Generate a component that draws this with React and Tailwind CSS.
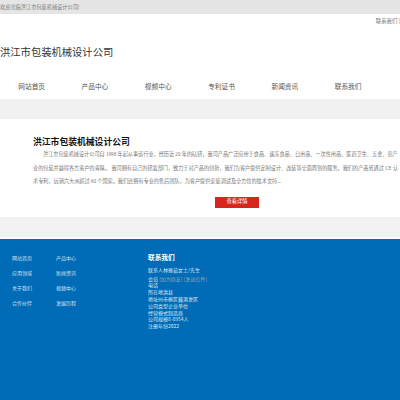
export default function App() {
  const nav = ["网站首页", "产品中心", "视频中心", "专利证书", "新闻资讯", "联系我们"];
  const col1 = ["网站首页", "应用领域", "关于我们", "合作伙伴"];
  const col2 = ["产品中心", "新闻资讯", "视频中心", "发展历程"];
  const font = { fontFamily: '"Liberation Serif", "Noto Sans CJK SC", serif' };
  return (
    <div className="w-full h-[400px] overflow-hidden bg-white" style={{ fontFamily: '"Noto Sans CJK SC", sans-serif' }}>
      <div className="h-[14px] bg-[#e5e5e5] flex items-center text-[5.2px] text-[#777] leading-none whitespace-nowrap">
        欢迎光临洪江市包装机械设计公司!
      </div>
      <div className="h-[16px] flex justify-end items-center text-[5.4px] text-[#777] leading-none whitespace-nowrap">
        <span>联系我们 |</span>
      </div>
      <div className="h-[44px] flex items-center text-[10.3px] text-[#333] leading-none whitespace-nowrap">
        洪江市包装机械设计公司
      </div>
      <div className="h-[25px] flex items-center text-[6.7px] text-[#555] leading-none">
        {nav.map((n) => (
          <div key={n} className="w-[63.3px] text-center whitespace-nowrap">{n}</div>
        ))}
      </div>
      <div className="h-[20px] bg-[#f1f1f1]" />
      <div className="h-[98px] pl-[33px] pt-[17px] overflow-hidden">
        <div className="text-[8.8px] font-bold text-[#111] leading-[12px] whitespace-nowrap">洪江市包装机械设计公司</div>
        <div className="text-[5.15px] text-[#777] leading-[13.5px] whitespace-nowrap" style={font}>
          <div className="pl-[10px]">洪江市包装机械设计公司自 1998 年起从事该行业，经历近 20 年的砧研，我司产品广泛应用于食品、速冻食品、日用品、一次性用品、医药卫生、五金、农产</div>
          <div>业的包装并赢得各方客户的青睐。 我司拥有自己的研发部门，致力于对产品的创新，我们为客户提供定制设计、改装等全面周到的服务。我们的产品皆通过 CE 认</div>
          <div>术专利，远销六大洲超过 60 个国家。我们还拥有专业的售后团队，为客户提供安装调试及全方位的技术支持...</div>
        </div>
        <div className="ml-[182px] mt-[8px] w-[44px] h-[11px] bg-[#d7261e] flex items-center justify-center text-[5.3px] text-white leading-none whitespace-nowrap">
          查看详情
        </div>
      </div>
      <div className="h-[20px] bg-[#f2f2f2]" />
      <div className="h-[2px] bg-[#fbfbfb]" />
      <div className="bg-[#006bb7] h-[200px] pt-[11px] pl-[12px] flex">
        <div className="w-[44px] text-[5px] text-[#d3e2f1] leading-[15px]">
          {col1.map((c) => (
            <div key={c} className="whitespace-nowrap">{c}</div>
          ))}
        </div>
        <div className="w-[92px] text-[5px] text-[#d3e2f1] leading-[15px]">
          {col2.map((c) => (
            <div key={c} className="whitespace-nowrap">{c}</div>
          ))}
        </div>
        <div className="flex flex-col">
          <div className="text-[6.7px] font-bold text-white leading-[15px] whitespace-nowrap">联系我们</div>
          <div className="mt-[2.4px] text-[5px] text-[#dce8f4] leading-[6.8px] whitespace-nowrap">
            <div className="mb-[1.5px]">联系人林雅茹女士/先生</div>
            <div>会员 <span className="text-[#8ea6bd]">[加为商友]</span> <span className="text-[#8ea6bd]">[发送信件]</span></div>
            <div>电话</div>
            <div>所在地洪县</div>
            <div>地址州市枫区藏港发区</div>
            <div>公司类型企业单位</div>
            <div>经营模式制造商</div>
            <div>公司规模8-8954人</div>
            <div>注册年份2022</div>
          </div>
        </div>
      </div>
    </div>
  );
}
